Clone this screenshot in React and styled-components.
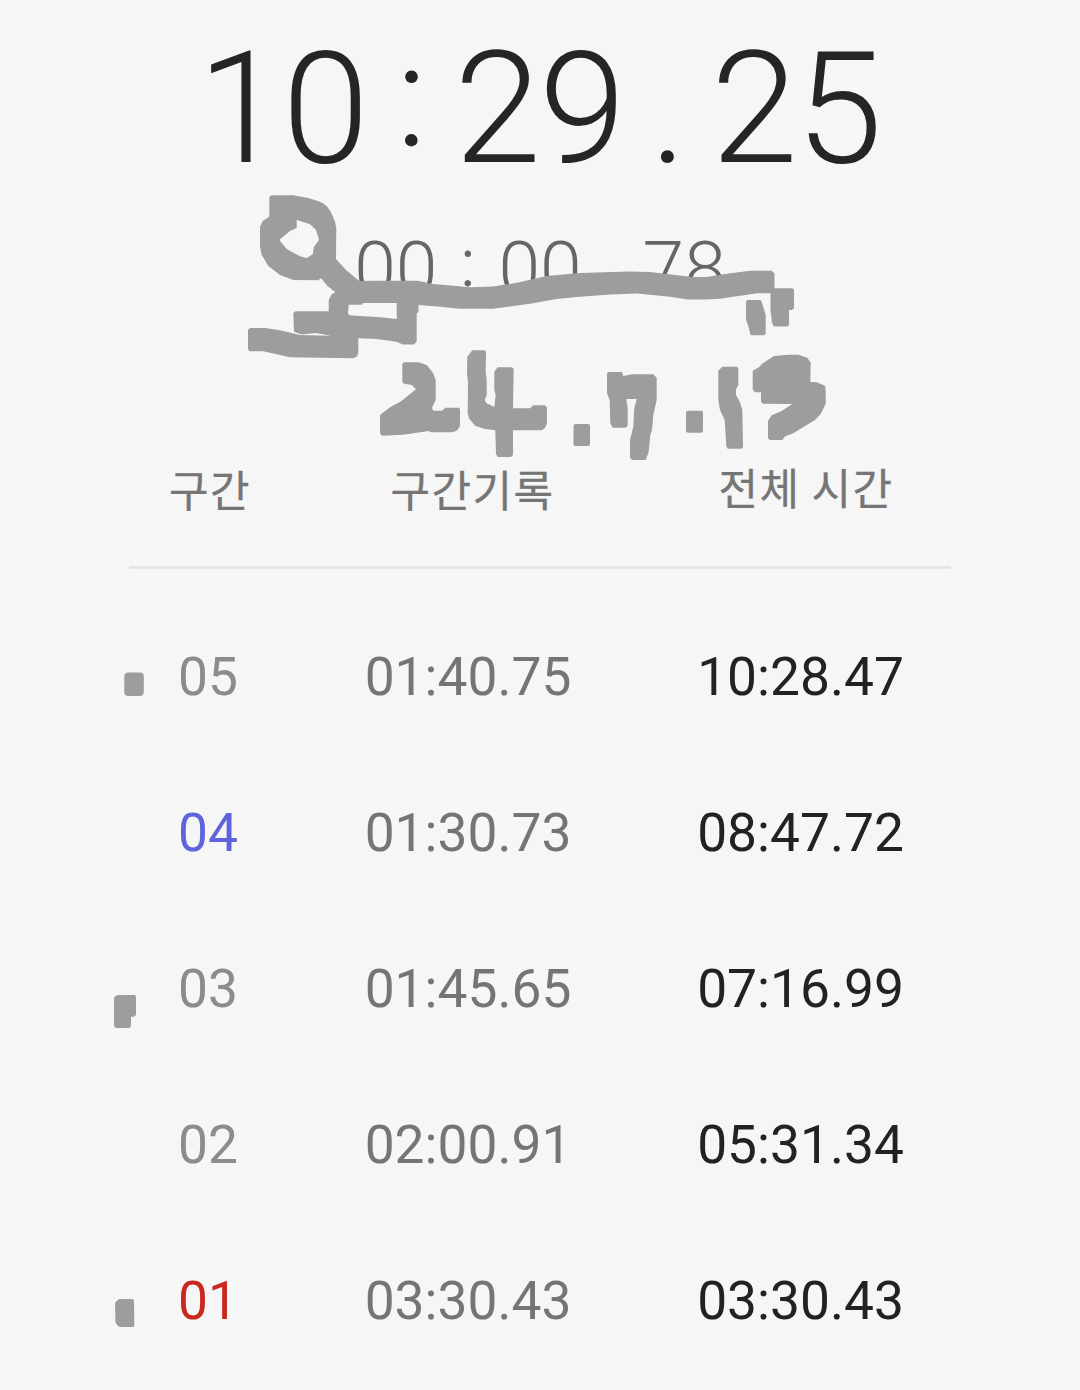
import styled, { createGlobalStyle } from "styled-components";

const GlobalStyle = createGlobalStyle`
  body {
    margin: 0;
    background: #f6f6f6;
  }
`;

const Screen = styled.main`
  position: relative;
  width: 1080px;
  height: 1390px;
  overflow: hidden;
  background: #f6f6f6;
  font-family: Roboto, "Noto Sans CJK KR", sans-serif;
`;

const Clock = styled.div`
  display: flex;
  justify-content: center;
  height: ${(props) => props.$height}px;
  line-height: ${(props) => props.$height}px;
  font-size: ${(props) => props.$size}px;
  font-weight: 300;
  letter-spacing: ${(props) => props.$spacing || 0}px;
  padding-right: ${(props) => -props.$spacing || 0}px;
  color: ${(props) => props.$color};
`;

const Separator = styled.span`
  width: ${(props) => props.$width}px;
  text-align: center;
`;

// the colon is a bit smaller than the digits and sits above the baseline
const Colon = styled(Separator)`
  margin-top: -${(props) => props.$raise}px;
  font-size: 0.9em;
  -webkit-text-stroke: 0.8px currentColor;
`;

const HeaderRow = styled.div`
  display: grid;
  grid-template-columns: 162px 363px 304px;
  box-sizing: border-box;
  height: 247px;
  padding-top: 140px;
  margin-left: 129px;
  line-height: 58px;
  font-size: 43px;
  letter-spacing: 1.4px;
  font-family: "Noto Sans CJK KR", sans-serif;
  -webkit-text-stroke: 0.3px currentColor;
  color: #757575;
  text-align: center;
`;

const HeaderCell = styled.span`
  margin-top: ${(props) => (props.$lift ? -2 : 0)}px;
`;

const Divider = styled.hr`
  width: 822px;
  height: 3px;
  margin: 0 0 30px 129px;
  border: 0;
  background: #e5e5e5;
`;

const LapRow = styled.div`
  display: grid;
  grid-template-columns: 158px 362px 303px;
  margin-left: 129px;
  line-height: 156px;
  font-size: 53.3px;
  text-align: center;
`;

const LapNumber = styled.span`
  color: ${(props) => props.$color || "#8c8c8c"};
`;

const LapTime = styled.span`
  color: #757575;
`;

const TotalTime = styled.span`
  color: #222222;
`;

const Ink = styled.svg`
  position: absolute;
  top: 0;
  left: 0;
  fill: #9d9d9d;
`;

const laps = [
  { no: "05", time: "01:40.75", total: "10:28.47" },
  { no: "04", time: "01:30.73", total: "08:47.72", color: "#6064dc" },
  { no: "03", time: "01:45.65", total: "07:16.99" },
  { no: "02", time: "02:00.91", total: "05:31.34" },
  { no: "01", time: "03:30.43", total: "03:30.43", color: "#c9281e" },
];

// marker scribbles drawn over the screen
function Scribbles() {
  return (
    <Ink width="1080" height="1390" viewBox="0 0 1080 1390" aria-hidden="true">
      <path
        fillRule="evenodd"
        d="M271 195.3H293L308 198L318 201L322.7 203L327 206.5L330.7 211.7L335 221.7L336.3 228.3L336 259L346 270L359.3 281L373 280.7H418L431 283.7L470 287.3L493 286.5L517 282.7L546.7 276L580 273L630 271.5L650 272L673 274.7L693 277H706.7L723 274.3L750 270.7H771.7L774.5 273.5V288.3H792.5L794 290V308L792 310H789V325L787.5 326.5H774L772 323L770.5 310V293.3H757L720 298.7L706.7 299.5H688L670 296.7L636.7 293.5L610 294.5L576.7 297L556.7 299L530 303.7L493 308.7H460L440 306.7L418.5 305V311.7L416.7 313.5V341.5L414 344.5H402.7L396.7 341.7L376.7 339L358.3 338.3V353L357 356.5L353 358.3L336.7 358L290 357.3L263.3 351.3H249.5L248 349V330L250 328H265L280 330.3L300 335L330.7 335.7L316 333L301.7 334.5L294 331.7L293.3 313.3L295.3 311.3H328.7V300L331.7 294.3L335.3 292.3L327.3 285.7L321 278.3L318.3 280.3L293.3 280L280 275L268.3 266L261.7 255L260 246.7V226.7L262.7 221L269.3 216.7V197Z
        M296.7 220L310 224.3L316 230L319 240L314 246.7L312.7 254.3L306.7 258L300 256.3L286.7 249L279.3 240L290 231L296.7 228Z
        M348.7 304.7H361.7L363.3 303H396.7V319L380 317.3L349.3 315.3L348 313.3Z"
      />
      <path d="M747.3 300H760.7L762 302.7L765.7 315V334L764 335.3H750.7L748.3 326L746 320V301.7Z" />
      <path d="M404 362.3H418.3L426.7 365L433.3 373.3L435.7 380V400L432 407.7L433.3 410.7H442L445.3 407.7H458.7L460 409V426L457.3 430.3L452.7 432.3H430.7L428.7 431L403.3 434.7L382 435.7L380 433.3V415L390 407.3L400 402L416 389.3L411.7 385L404 383.7L402.3 382V364Z" />
      <path d="M472.3 350.3H484.7L486 351.7L485.7 371.7L486.7 380V395L484.7 400L486.3 403L494.3 407L495.7 395L494.3 390V371.7L497.7 367.3H512L513.7 369L513 408.3H530L533.3 405.3H545.3L547 407.7V423.3L545 428L541.7 430.3H513V455L511 457H498L496 454.3L495.3 430.3L485 429L475 425.7L469 418.3L467.7 413.3L468 381.7L467 373.3L467.3 356.7Z" />
      <rect x="573.5" y="424" width="16.5" height="22" rx="2" />
      <path d="M608.3 372H622L623.3 376L631.7 374.3H653.3L656.7 377.7V400L653.3 415L652 430L650.3 435L648.7 451.7L645.7 460H632L630 457.7V440L633.3 426.7L634.3 408.3L636.7 399H626.3L627.7 408.3V425.7L625.7 427.7H612.7L610.3 423.3L609.7 400L607 393.3V373.3Z" />
      <rect x="686" y="410.7" width="17" height="22" rx="2" />
      <path d="M722.3 366.7H737L738.3 368.3V385L736 389.3V395L740 402.3L742.3 410L743 446.7L741.7 448.7H727.7L726.3 446L724.7 420L720 410L718.3 400V370.7Z" />
      <path d="M774 356L788.3 354.7H798.3L807.3 357.7L810.7 362.7L810.3 382L816.7 382.3L825 385.7L825.7 390V404L820.7 414L815 420L793.3 433.3L785.3 436.3L782.3 440H769.7L768 438.3V420.7L771.7 415.3L781.7 411L792.3 404L762.7 403.7L761 401.3V392.3H754.7L752.7 389.3V370.7L759 367.3L761.7 364Z" />
      <rect x="124.3" y="672.5" width="19.5" height="23.5" rx="4" />
      <path d="M118 995H134.7L136 996.3V1015L134 1016.7H131V1026L129.3 1028H115.7L114 1026V998L115.5 996Z" />
      <path d="M119.3 1299H132.7L134 1300.7L134.3 1326L133.3 1327H120L117.5 1325.5L115.5 1322.7L115 1303.3L116.5 1301Z" />
    </Ink>
  );
}

function App() {
  return (
    <>
      <GlobalStyle />
      <Screen>
        <Clock $height={217} $size={156.5} $spacing={-2} $color="#252525">
          <span>10</span>
          <Colon $width={87.2} $raise={12}>:</Colon>
          <span>29</span>
          <Separator $width={87.2}>.</Separator>
          <span>25</span>
        </Clock>
        <Clock $height={102} $size={75} $color="#666666">
          <span>00</span>
          <Colon $width={61} $raise={5.3}>:</Colon>
          <span>00</span>
          <Separator $width={61}>.</Separator>
          <span>78</span>
        </Clock>
        <HeaderRow>
          <HeaderCell>구간</HeaderCell>
          <HeaderCell>구간기록</HeaderCell>
          <HeaderCell $lift>전체 시간</HeaderCell>
        </HeaderRow>
        <Divider />
        {laps.map((lap) => (
          <LapRow key={lap.no}>
            <LapNumber $color={lap.color}>{lap.no}</LapNumber>
            <LapTime>{lap.time}</LapTime>
            <TotalTime>{lap.total}</TotalTime>
          </LapRow>
        ))}
        <Scribbles />
      </Screen>
    </>
  );
}

export default App;
